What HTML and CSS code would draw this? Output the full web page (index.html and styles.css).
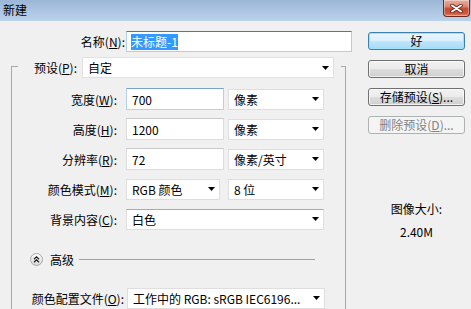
FILE: index.html
```html
<!DOCTYPE html>
<html lang="zh-CN">
<head>
<meta charset="utf-8">
<title>新建</title>
<link rel="stylesheet" href="styles.css">
</head>
<body>
<div class="titlebar">
  <span class="title">新建</span>
  <div class="close">
    <svg width="13" height="9" viewBox="0 0 13 9"><path d="M2 1.5 L11 7.5 M11 1.5 L2 7.5" stroke="#5a2418" stroke-width="3.6" stroke-linecap="round"/><path d="M2 1.5 L11 7.5 M11 1.5 L2 7.5" stroke="#fff" stroke-width="2" stroke-linecap="round"/></svg>
  </div>
</div>
<div class="body">
  <div class="main">
    <div class="name-row">
      <label class="name-lbl">名称(<u>N</u>):</label>
      <div class="tb name"><span class="sel">未标题-1</span></div>
    </div>
    <div class="group">
      <div class="group-head">
        <label class="head-lbl">预设(<u>P</u>):</label>
        <div class="tb combo preset"><span>自定</span><svg class="arr" width="7" height="4" viewBox="0 0 7 4"><path d="M0 0H7L3.5 4Z" fill="#000"/></svg></div>
      </div>
      <div class="rows">
        <div class="row">
          <label class="lbl">宽度(<u>W</u>):</label>
          <div class="tb num hot">700</div>
          <div class="tb combo unit"><span>像素</span><svg class="arr" width="7" height="4" viewBox="0 0 7 4"><path d="M0 0H7L3.5 4Z" fill="#000"/></svg></div>
        </div>
        <div class="row">
          <label class="lbl">高度(<u>H</u>):</label>
          <div class="tb num">1200</div>
          <div class="tb combo unit"><span>像素</span><svg class="arr" width="7" height="4" viewBox="0 0 7 4"><path d="M0 0H7L3.5 4Z" fill="#000"/></svg></div>
        </div>
        <div class="row">
          <label class="lbl">分辨率(<u>R</u>):</label>
          <div class="tb num">72</div>
          <div class="tb combo unit"><span>像素/英寸</span><svg class="arr" width="7" height="4" viewBox="0 0 7 4"><path d="M0 0H7L3.5 4Z" fill="#000"/></svg></div>
        </div>
        <div class="row">
          <label class="lbl">颜色模式(<u>M</u>):</label>
          <div class="tb combo mode"><span>RGB 颜色</span><svg class="arr" width="7" height="4" viewBox="0 0 7 4"><path d="M0 0H7L3.5 4Z" fill="#000"/></svg></div>
          <div class="tb combo unit bits"><span>8 位</span><svg class="arr" width="7" height="4" viewBox="0 0 7 4"><path d="M0 0H7L3.5 4Z" fill="#000"/></svg></div>
        </div>
        <div class="row">
          <label class="lbl">背景内容(<u>C</u>):</label>
          <div class="tb combo full dark"><span>白色</span><svg class="arr" width="7" height="4" viewBox="0 0 7 4"><path d="M0 0H7L3.5 4Z" fill="#000"/></svg></div>
        </div>
      </div>
      <div class="adv">
        <svg class="adv-ico" width="13" height="13" viewBox="0 0 13 13">
          <defs><linearGradient id="g" x1="0" y1="0" x2="0" y2="1"><stop offset="0" stop-color="#ffffff"/><stop offset="1" stop-color="#d6d6d6"/></linearGradient></defs>
          <circle cx="6.5" cy="6.5" r="6" fill="url(#g)" stroke="#a8a8a8"/>
          <path d="M4 6.2 L6.5 3.8 L9 6.2 M4 9.2 L6.5 6.8 L9 9.2" fill="none" stroke="#1a1a1a" stroke-width="1.2"/>
        </svg>
        <span class="adv-txt">高级</span>
        <div class="adv-line"></div>
      </div>
      <div class="row profile">
        <label class="lbl">颜色配置文件(<u>O</u>):</label>
        <div class="tb combo full"><span>工作中的 RGB: sRGB IEC6196...</span><svg class="arr" width="7" height="4" viewBox="0 0 7 4"><path d="M0 0H7L3.5 4Z" fill="#000"/></svg></div>
      </div>
    </div>
  </div>
  <div class="side">
    <div class="btn default">好</div>
    <div class="btn">取消</div>
    <div class="btn">存储预设(<u>S</u>)...</div>
    <div class="btn disabled">删除预设(<u>D</u>)...</div>
    <div class="info">
      <div>图像大小:</div>
      <div class="size">2.40M</div>
    </div>
  </div>
</div>
</body>
</html>
```
FILE: styles.css
```css
* { box-sizing: border-box; }
html, body { margin: 0; padding: 0; }
body {
  width: 471px;
  height: 309px;
  overflow: hidden;
  background: #f0f0f0;
  font-family: "Noto Sans CJK SC", "Noto Sans", sans-serif;
  font-size: 12px;
  color: #000;
}
u { text-underline-offset: 1px; }

.titlebar {
  height: 21px;
  display: flex;
  align-items: flex-start;
  background: linear-gradient(#9bb6d6, #bcd3ec);
}
.title { padding-left: 3px; line-height: 20px; }
.close {
  margin-left: auto;
  margin-right: 1px;
  width: 27px;
  height: 17px;
  border: 1px solid #6e2a1c;
  border-top: none;
  border-radius: 0 0 4px 4px;
  background: linear-gradient(#e9b0a2, #dc8670 40%, #c9482e 55%, #d05a3e 85%, #e0836a);
  box-shadow: inset 0 0 0 1px rgba(255,255,255,.35);
  display: flex;
  align-items: center;
  justify-content: center;
}

.body { display: flex; }
.main { width: 360px; }

.name-row { display: flex; margin-top: 10px; height: 21px; }
.name-lbl { width: 126px; padding-right: 1px; text-align: right; line-height: 21px; }

.tb {
  height: 22px;
  background: #fff;
  border: 1px solid #dcdcdc;
  border-top-color: #c9c9c9;
  padding-left: 5px;
  display: flex;
  align-items: center;
  white-space: nowrap;
}
.tb.name {
  width: 226px;
  height: 21px;
  padding-left: 4px;
  border-color: #b3cfe8;
  border-top-color: #3e7db0;
}
.sel { background: #3399ff; color: #fff; line-height: 16px; }
.tb.hot { border-color: #b7d1ea; border-top-color: #7aa3cc; }

.group {
  margin: 14px 0 0 11px;
  width: 335px;
  border: 1px solid #a8a8a8;
  border-bottom: none;
}
.group-head {
  display: flex;
  margin: -10px 0 0 6px;
  width: 323px;
  height: 21px;
  background: #f0f0f0;
}
.head-lbl { width: 64px; padding-right: 5px; text-align: right; line-height: 21px; }
.combo { justify-content: space-between; padding-right: 4px; }
.tb.preset { width: 252px; height: 21px; border-color: #e0e0e0; }

.rows { margin-top: 10px; }
.row { display: flex; align-items: center; height: 22px; }
.row + .row { margin-top: 8px; }
.lbl { width: 105px; margin-right: 9px; text-align: right; white-space: nowrap; }
.tb.num { width: 98px; }
.tb.unit { width: 96px; margin-left: 4px; height: 21px; border-color: #dedede; }
.tb.mode { width: 94px; height: 21px; border-color: #dedede; }
.tb.bits { margin-left: 8px; }
.tb.full { width: 198px; height: 21px; border-color: #dedede; }
.tb.dark { border-top-color: #a9a9a9; }

.adv {
  display: flex;
  align-items: center;
  height: 14px;
  margin-top: 22px;
  padding-left: 18px;
}
.adv-txt { margin-left: 7px; }
.adv-line { flex: 1; height: 1px; margin: 0 30px 0 5px; background: #a0a0a0; }

.row.profile { margin-top: 21px; }
.profile .lbl { width: 112px; margin-right: 3px; }

.side { margin-left: 8px; width: 97px; padding-top: 11px; }
.btn {
  height: 18px;
  border: 1px solid #707070;
  border-radius: 3px;
  background: linear-gradient(#f2f2f2 0%, #ebebeb 48%, #dddddd 52%, #cfcfcf 100%);
  box-shadow: inset 0 0 0 1px rgba(255,255,255,.7);
  display: flex;
  align-items: center;
  justify-content: center;
  line-height: 16px;
  white-space: nowrap;
}
.btn + .btn { margin-top: 10px; }
.btn.default {
  border-color: #3c7fb1;
  background: linear-gradient(#eaf6fd 0%, #d9f0fc 48%, #bee6fd 52%, #a7d9f5 100%);
  box-shadow: inset 0 0 0 1px #9fe3fb;
}
.btn.disabled {
  border-color: #adb2b5;
  background: #f4f4f4;
  color: #838383;
  box-shadow: none;
}
.info { margin-top: 66px; text-align: center; line-height: 17px; }
.info .size { margin-top: 6px; }
```
